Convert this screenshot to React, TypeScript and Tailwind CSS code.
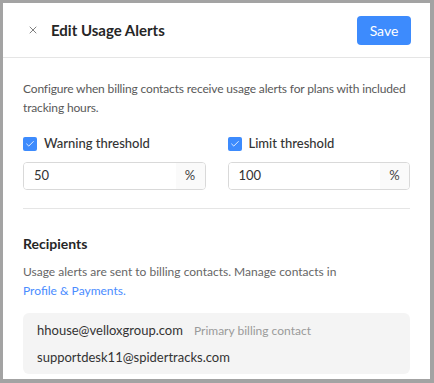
import { X, Check } from 'lucide-react';

const font = { fontFamily: 'Lato, "Noto Sans", sans-serif' };

function Threshold({ label, value }: { label: string; value: string }) {
  return (
    <div className="flex flex-col">
      <label className="flex items-center gap-[7px] h-[14px]">
        <span className="w-[14px] h-[14px] rounded-[2px] bg-[#3d8bfd] flex items-center justify-center">
          <Check size={10} strokeWidth={2} className="text-white" />
        </span>
        <span className="text-[13px] font-medium text-[#333]">{label}</span>
      </label>
      <div className="mt-[11px] flex h-[28px] border border-[#d9d9d9] rounded-[4px] overflow-hidden">
        <input
          readOnly
          value={value}
          className="flex-1 min-w-0 px-[10px] text-[13px] text-[#333] outline-none bg-white"
        />
        <span className="w-[29px] bg-[#fafafa] flex items-center justify-center text-[13px] text-[#444]">
          %
        </span>
      </div>
    </div>
  );
}

export default function App() {
  return (
    <div className="bg-[#a3a3a3] pl-[3px] pt-[3px] pr-[4px] pb-[4px] w-[434px] h-[383px]" style={font}>
      <div className="bg-white w-full h-full flex flex-col">
        {/* header */}
        <div className="h-[55px] border-b border-[#e5e5e5] flex items-center pl-[24px] pr-[19px]">
          <X size={12} strokeWidth={1.5} className="text-[#555]" />
          <h1 className="ml-[12px] text-[15px] font-bold text-[#262626]">Edit Usage Alerts</h1>
          <button className="ml-auto w-[54px] h-[29px] rounded-[4px] bg-[#3d8bfd] text-white text-[14px]">
            Save
          </button>
        </div>

        <div className="px-[20px] pt-[21px]">
          <p className="text-[12px] leading-[19px] tracking-[-0.15px] text-[#595959]">
            Configure when billing contacts receive usage alerts for plans with included tracking hours.
          </p>

          <div className="mt-[20px] grid grid-cols-2 gap-[22px]">
            <Threshold label="Warning threshold" value="50" />
            <Threshold label="Limit threshold" value="100" />
          </div>

          <div className="mt-[18px] border-t border-[#e5e5e5]" />

          <h2 className="mt-[24px] text-[14px] font-bold text-[#262626]">Recipients</h2>
          <p className="mt-[8px] text-[12px] leading-[19px] text-[#666]">
            Usage alerts are sent to billing contacts. Manage contacts in
            <br />
            <a className="text-[#4a8cff]">Profile &amp; Payments.</a>
          </p>

          <div className="mt-[13px] bg-[#f4f4f4] rounded-[6px] px-[14px] pt-[8px] pb-[7px] flex flex-col gap-[7px]">
            <div className="flex items-center gap-[11px]">
              <span className="text-[13px] text-[#333]">hhouse@velloxgroup.com</span>
              <span className="text-[12px] text-[#9a9a9a]">Primary billing contact</span>
            </div>
            <span className="text-[13px] text-[#333]">supportdesk11@spidertracks.com</span>
          </div>
        </div>
      </div>
    </div>
  );
}
